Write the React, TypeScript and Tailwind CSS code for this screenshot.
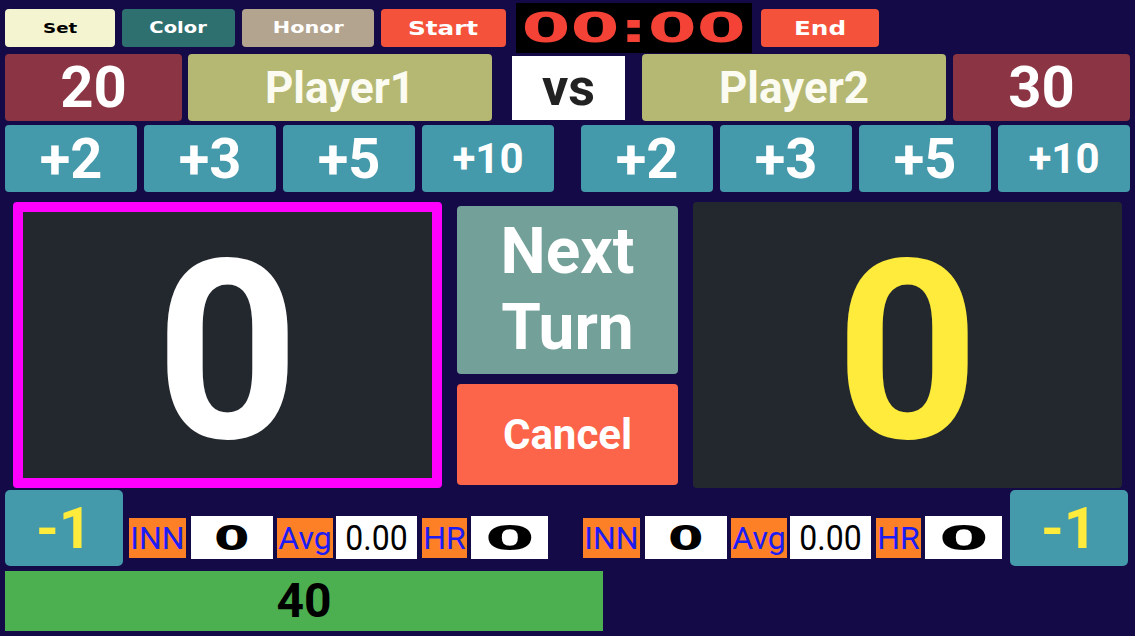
import React from 'react';

const roboto = { fontFamily: 'Roboto, "Noto Sans", sans-serif' };
const deja = { fontFamily: '"DejaVu Sans", Verdana, sans-serif' };

function TopButton({ label, className, size }: { label: string; className: string; size: string }) {
  return (
    <div className={`flex h-[38px] items-center justify-center rounded-[4px] ${className}`}>
      <span className={`inline-block scale-x-[1.3] font-bold ${size}`} style={deja}>
        {label}
      </span>
    </div>
  );
}

function PlusRow() {
  const values = ['+2', '+3', '+5', '+10'];
  return (
    <div className="grid w-[549px] grid-cols-4 gap-[7px]">
      {values.map((v) => (
        <div
          key={v}
          className={`flex h-[67px] items-center justify-center rounded-[4px] bg-[#4499aa] font-bold text-white ${
            v === '+10' ? 'text-[42px]' : 'text-[56px]'
          }`}
          style={roboto}
        >
          {v}
        </div>
      ))}
    </div>
  );
}

function Label({ text, w }: { text: string; w: string }) {
  return (
    <div
      className={`flex h-[40px] items-center justify-center bg-[#fd7f26] text-[32px] leading-none text-[#1c1cf5] ${w}`}
      style={roboto}
    >
      {text}
    </div>
  );
}

function Value({ children, w, wide }: { children?: React.ReactNode; w: string; wide?: string }) {
  return (
    <div className={`flex h-[43px] items-center justify-center overflow-hidden bg-white text-black ${w}`}>
      {wide ? (
        <span className={`inline-block font-bold text-[34px] leading-none ${wide}`} style={deja}>
          0
        </span>
      ) : (
        <span className="inline-block scale-y-[1.08] text-[32px] leading-none" style={roboto}>
          {children}
        </span>
      )}
    </div>
  );
}

function Stats() {
  return (
    <div className="mt-[26px] flex items-center">
      <Label text="INN" w="w-[57px]" />
      <div className="w-[5px]" />
      <Value w="w-[82px]" wide="scale-x-[1.5]" />
      <div className="w-[4px]" />
      <Label text="Avg" w="w-[56px]" />
      <div className="w-[3px]" />
      <Value w="w-[81px]">0.00</Value>
      <div className="w-[5px]" />
      <Label text="HR" w="w-[45px]" />
      <div className="w-[4px]" />
      <Value w="w-[77px]" wide="scale-x-[2.1]" />
    </div>
  );
}

function MinusOne() {
  return (
    <div
      className="flex h-[76px] w-[118px] items-center justify-center rounded-[5px] bg-[#4499aa] text-[58px] font-bold text-[#ffeb3b]"
      style={roboto}
    >
      -1
    </div>
  );
}

export default function App() {
  return (
    <div className="h-[636px] w-[1135px] overflow-hidden bg-[#140a48]">
      {/* top controls */}
      <div className="mt-[3px] flex h-[50px] items-center pl-[5px]">
        <div className="w-[110px]">
          <TopButton label="Set" className="bg-[#f5f4d0] text-black" size="text-[14px]" />
        </div>
        <div className="ml-[7px] w-[113px]">
          <TopButton label="Color" className="bg-[#2e7070] text-white" size="text-[15px]" />
        </div>
        <div className="ml-[7px] w-[132px]">
          <TopButton label="Honor" className="bg-[#b3a48f] text-white" size="text-[16px]" />
        </div>
        <div className="ml-[7px] w-[125px]">
          <TopButton label="Start" className="bg-[#f4523a] text-white" size="text-[19px]" />
        </div>
        <div className="ml-[10px] flex h-[50px] w-[236px] items-center justify-center bg-black">
          <span className="inline-block scale-x-[1.76] text-[40px] font-bold leading-none text-[#f44336]" style={deja}>
            00:00
          </span>
        </div>
        <div className="ml-[9px] w-[118px]">
          <TopButton label="End" className="bg-[#f4523a] text-white" size="text-[19px]" />
        </div>
      </div>

      {/* players */}
      <div className="mt-[1px] flex h-[67px] items-center pl-[5px]" style={roboto}>
        <div className="flex h-[67px] w-[177px] items-center justify-center rounded-[4px] bg-[#8b3443] text-[58px] font-bold text-white">
          20
        </div>
        <div className="ml-[6px] flex h-[67px] w-[304px] items-center justify-center rounded-[4px] bg-[#b5b873] text-[44px] font-bold text-[#fbfbf2]">
          Player1
        </div>
        <div className="ml-[20px] flex h-[64px] w-[113px] items-center justify-center bg-white text-[52px] font-bold text-[#222222]">
          vs
        </div>
        <div className="ml-[17px] flex h-[67px] w-[304px] items-center justify-center rounded-[4px] bg-[#b5b873] text-[44px] font-bold text-[#fbfbf2]">
          Player2
        </div>
        <div className="ml-[7px] flex h-[67px] w-[177px] items-center justify-center rounded-[4px] bg-[#8b3443] text-[58px] font-bold text-white">
          30
        </div>
      </div>

      {/* point buttons */}
      <div className="mt-[4px] flex gap-[27px] pl-[5px]">
        <PlusRow />
        <PlusRow />
      </div>

      {/* scores */}
      <div className="mt-[10px] flex h-[286px] gap-[15px] pl-[13px]" style={roboto}>
        <div className="flex w-[429px] items-center justify-center rounded-[4px] border-[10px] border-[#ff00ff] bg-[#22282e] pt-[16px] text-[250px] font-bold leading-none text-white">
          0
        </div>
        <div className="flex w-[221px] flex-col gap-[10px] pt-[4px]">
          <div className="flex h-[168px] items-center justify-center rounded-[4px] bg-[#73a098] text-center text-[64px] font-bold leading-[76px] text-white">
            Next
            <br />
            Turn
          </div>
          <div className="flex h-[101px] items-center justify-center rounded-[4px] bg-[#fc654a] text-[42px] font-bold text-white">
            Cancel
          </div>
        </div>
        <div className="flex w-[429px] items-center justify-center rounded-[4px] bg-[#22282e] pt-[16px] text-[250px] font-bold leading-none text-[#ffeb3b]">
          0
        </div>
      </div>

      {/* stats */}
      <div className="mt-[2px] flex h-[76px] pl-[5px]">
        <MinusOne />
        <div className="ml-[6px]">
          <Stats />
        </div>
        <div className="ml-[35px]">
          <Stats />
        </div>
        <div className="ml-[8px]">
          <MinusOne />
        </div>
      </div>

      {/* total */}
      <div
        className="ml-[5px] mt-[5px] flex h-[60px] w-[598px] items-center justify-center bg-[#4caf50] text-[48px] font-bold text-black"
        style={roboto}
      >
        40
      </div>
    </div>
  );
}
